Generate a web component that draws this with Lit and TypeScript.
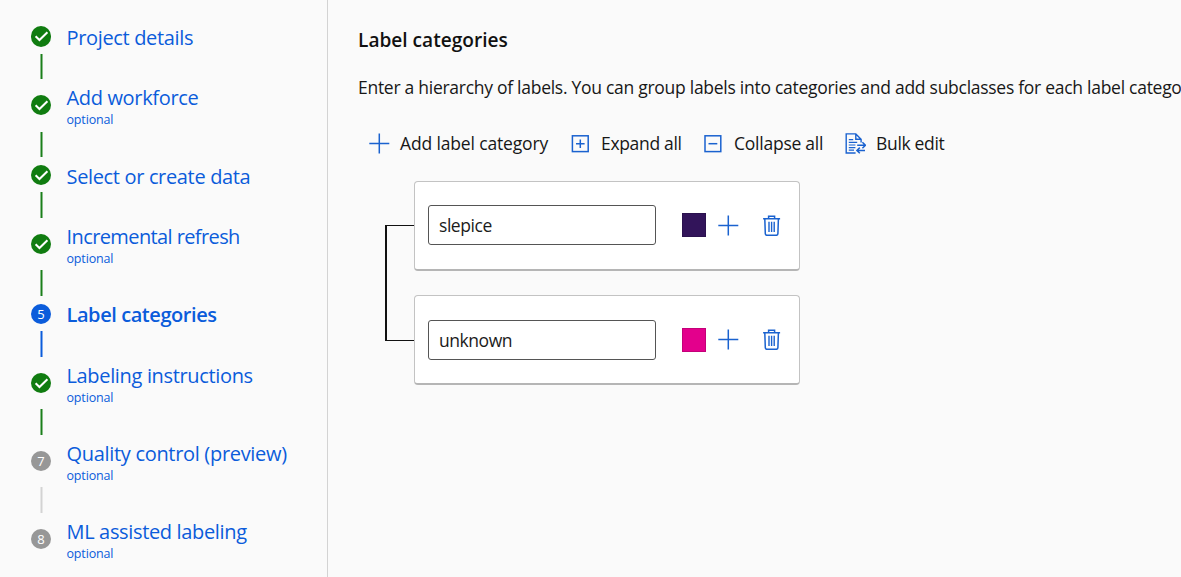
import { LitElement, html, css, svg, nothing } from "lit";
import { customElement } from "lit/decorators.js";
import { classMap } from "lit/directives/class-map.js";

type StepState = "done" | "current" | "todo";
interface Step { title: string; optional: boolean; state: StepState; fit: string }

const steps: Step[] = [
  { title: "Project details", optional: false, state: "done", fit: "s1" },
  { title: "Add workforce", optional: true, state: "done", fit: "s2" },
  { title: "Select or create data", optional: false, state: "done", fit: "s3" },
  { title: "Incremental refresh", optional: true, state: "done", fit: "s4" },
  { title: "Label categories", optional: false, state: "current", fit: "s5" },
  { title: "Labeling instructions", optional: true, state: "done", fit: "s6" },
  { title: "Quality control (preview)", optional: true, state: "todo", fit: "s7" },
  { title: "ML assisted labeling", optional: true, state: "todo", fit: "s8" },
];

const icon = (size: number, body: unknown) => html`
  <svg width=${size} height=${size} viewBox="0 0 ${size} ${size}" fill="none" stroke="#1a62cf" stroke-width="1.4">${body}</svg>`;

const plusIcon = () => icon(21, svg`<path d="M.3 10.5h20M10.3 .5v20" stroke-width="1.5"/>`);
const expandIcon = () => icon(21, svg`<rect x="2.4" y="2.8" width="15.8" height="15.8" stroke-width="1.5"/><path d="M6 10.7h8.6M10.3 6.4v8.6" stroke-width="1.5"/>`);
const collapseIcon = () => icon(21, svg`<rect x="2" y="2.8" width="15.8" height="15.8" stroke-width="1.5"/><path d="M5.5 10.7h8.8" stroke-width="1.5"/>`);
const bulkIcon = () => icon(21, svg`
  <path d="M10.6 20H1.2V.9h9.6l5.3 5.3v3.2M10.8 .9v5.3h5.3" stroke-width="1.4"/>
  <path d="M3.8 6.6h4.4M3.8 9.3h8.4M3.8 12h6.6M3.8 14.6h6.6M3.8 17.2h5.2" stroke-width="1.2"/>
  <path d="M12.2 12.3h8M17.4 9.3l3 3-3 3M20 17.4h-8M14.8 14.6l-2.9 2.8 2.9 2.9" stroke-width="1.5"/>`);
const trashIcon = () => icon(21, svg`
  <path d="M2.1 3.7h17M7.6 3.5V1.2h6v2.3" stroke-width="1.5"/>
  <path d="M3.8 3.8l.5 14.8q.1 1.7 1.6 1.7h9.4q1.5 0 1.6-1.7l.5-14.8" stroke-width="1.5"/>
  <path d="M8 6.8v10.2M10.6 6.8v10.2M13.2 6.8v10.2" stroke-width="1.4"/>`);

@customElement("step-nav")
export class StepNav extends LitElement {
  static styles = css`
    :host { display: block; box-sizing: border-box; padding: 24px 0 0 31px; height: 577px; overflow: hidden; border-right: 1px solid #d3d3d3; }
    .step { display: flex; height: 60.8px; color: #0b5cdb; }
    .step:first-child { height: 60.4px; }
    .step.optional { height: 78px; }
    .step:nth-child(2) { height: 78.2px; }
    .rail { display: flex; flex-direction: column; align-items: center; width: 20px; padding: 2.2px 0 5.4px; box-sizing: border-box; flex: none; }
    .optional .rail { padding-top: 10.6px; }
    .dot { width: 20.4px; height: 20.4px; flex: none; border-radius: 50%; background: #107c10; color: #fff; font-size: 13px; line-height: 21px; text-align: center; }
    .dot svg { display: block; width: 100%; height: 100%; }
    .current .dot { background: #0b5cdb; }
    .todo .dot { background: #979797; }
    .line { margin-top: auto; width: 2px; height: 25.5px; background: #1a7f1a; transform: translateX(.5px); }
    .current .line { background: #0b5cdb; }
    .todo .line { background: #d3d3d3; }
    .text { margin-left: 15.5px; white-space: nowrap; }
    .title { font-size: 20px; line-height: 28px; letter-spacing: -.34px; }
    .s4 { letter-spacing: -.6px; }
    .s5 { letter-spacing: -.43px; }
    .s7 { letter-spacing: -.31px; }
    .current .title { font-weight: 600; }
    .sub { font-size: 12.5px; line-height: 14px; margin-top: 1px; letter-spacing: -.15px; }
  `;
  render() {
    return steps.map((s, i) => html`
      <div class=${classMap({ step: true, optional: s.optional, [s.state]: true })}>
        <div class="rail">
          <div class="dot">${s.state === "done"
            ? html`<svg viewBox="0 0 20 20" fill="none" stroke="#fff" stroke-width="2"><path d="M4.5 10l3.8 3.7 7.8-7.6"/></svg>`
            : i + 1}</div>
          ${i < steps.length - 1 ? html`<div class="line"></div>` : nothing}
        </div>
        <div class="text">
          <div class="title ${s.fit}">${s.title}</div>
          ${s.optional ? html`<div class="sub">optional</div>` : nothing}
        </div>
      </div>`);
  }
}

@customElement("label-card")
export class LabelCard extends LitElement {
  static properties = { name: {}, color: {} };
  declare name: string;
  declare color: string;
  static styles = css`
    :host { display: flex; align-items: center; box-sizing: border-box; width: 386px; height: 89.5px; padding-left: 13px; background: #fff; border: 1px solid #c3c3c3; border-bottom: 2px solid #b5b5b5; border-radius: 4px; }
    .field { box-sizing: border-box; width: 228px; height: 40px; border: 1.3px solid #555; border-radius: 3px; padding: 0 10px; font-size: 17.5px; line-height: 39px; color: #1b1b1b; letter-spacing: -.45px; }
    .swatch { box-sizing: border-box; width: 24px; height: 24px; margin-left: 26px; border: 1px solid #0002; }
    .add { margin-left: 12.4px; height: 21px; }
    .del { margin-left: 21.2px; height: 21px; }
    svg { display: block; }
  `;
  render() {
    return html`
      <div class="field">${this.name}</div>
      <div class="swatch" style="background:${this.color}"></div>
      <div class="add">${plusIcon()}</div>
      <div class="del">${trashIcon()}</div>`;
  }
}

@customElement("app-root")
export class AppRoot extends LitElement {
  static styles = css`
    :host { display: grid; grid-template-columns: 328px 1fr; height: 577px; overflow: hidden; background: #fafafa; font-family: "Open Sans", "Noto Sans", sans-serif; color: #171717; }
    .main { padding: 27px 0 0 30px; overflow: hidden; white-space: nowrap; }
    h1 { margin: 0; font-size: 19.1px; line-height: 27px; font-weight: 600; letter-spacing: 0; color: #111; }
    p { margin: 20px 0 0; font-size: 17.5px; line-height: 26px; letter-spacing: -.275px; }
    .tools { display: grid; grid-template-columns: 201px 133px 142px auto; margin: 30px 0 0 11px; font-size: 17.5px; line-height: 26px; letter-spacing: -.15px; }
    .t2, .t4 { letter-spacing: -.33px; }
    .t3 { letter-spacing: -.24px; }
    .tool { display: flex; align-items: center; gap: 10px; }
    .tool svg { flex: none; display: block; }
    .tree { display: flex; margin: 25px 0 0 27px; }
    .branch { box-sizing: border-box; width: 29px; height: 115.5px; margin-top: 44px; border: 1.5px solid #111; border-left-width: 2px; border-right: 0; }
    .cards { display: grid; gap: 24.8px; }
  `;
  render() {
    return html`
      <step-nav></step-nav>
      <div class="main">
        <h1>Label categories</h1>
        <p>Enter a hierarchy of labels. You can group labels into categories and add subclasses for each label catego</p>
        <div class="tools">
          <div class="tool t1">${plusIcon()}<span>Add label category</span></div>
          <div class="tool t2">${expandIcon()}<span>Expand all</span></div>
          <div class="tool t3">${collapseIcon()}<span>Collapse all</span></div>
          <div class="tool t4">${bulkIcon()}<span>Bulk edit</span></div>
        </div>
        <div class="tree">
          <div class="branch"></div>
          <div class="cards">
            <label-card name="slepice" color="#32145a"></label-card>
            <label-card name="unknown" color="#e3008c"></label-card>
          </div>
        </div>
      </div>`;
  }
}
